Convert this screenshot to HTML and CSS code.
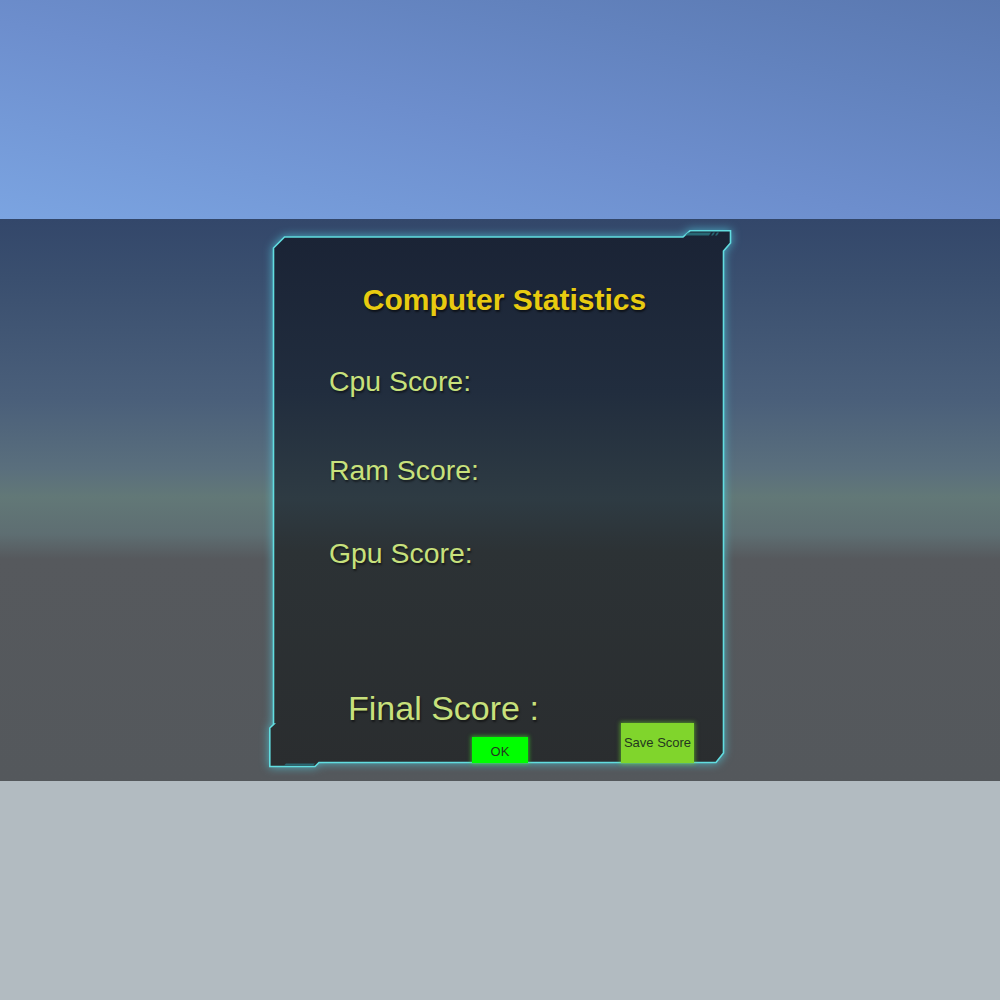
FILE: index.html
```html
<!DOCTYPE html>
<html>
<head>
<meta charset="utf-8">
<link rel="stylesheet" href="styles.css">
</head>
<body>
<div class="scene">
  <div class="sky"></div>
  <div class="horizon">
    <div class="panel">
      <svg class="frame" width="470" height="546" viewBox="-4 -4 470 546">
        <defs>
          <linearGradient id="fill" x1="0" y1="0" x2="0" y2="1">
            <stop offset="0" stop-color="#1a2335"/>
            <stop offset="0.3" stop-color="#212d3e"/>
            <stop offset="0.5" stop-color="#2e3b43"/>
            <stop offset="0.6" stop-color="#2c3235"/>
            <stop offset="1" stop-color="#2a2d2f"/>
          </linearGradient>
        </defs>
        <polygon class="shape" points="4.5,18 15.5,7 414,7 421,0.8 461.5,0.8 461.5,13 454.5,21 454.5,523 447,532.5 50,532.5 46,536.5 0.8,536.5 0.8,498 5,494 4.5,494"/>
        <polygon class="deco" points="419,2.5 442,2.5 440,5.5 416,5.5"/>
        <polygon class="deco" points="444,2.5 446,2.5 444,5.5 442,5.5"/>
        <polygon class="deco" points="448,2.5 450,2.5 448,5.5 446,5.5"/>
        <polygon class="deco" points="17,533.5 46,533.5 44,535.5 15,535.5"/>
      </svg>
      <div class="content">
        <h1 class="title">Computer Statistics</h1>
        <div class="stat stat-cpu">Cpu Score:</div>
        <div class="stat stat-ram">Ram Score:</div>
        <div class="stat stat-gpu">Gpu Score:</div>
        <div class="bottom">
          <div class="final">Final Score :</div>
          <div class="buttons">
            <button class="btn btn-ok">OK</button>
            <button class="btn btn-save">Save Score</button>
          </div>
        </div>
      </div>
    </div>
  </div>
  <div class="ground"></div>
</div>
</body>
</html>
```
FILE: styles.css
```css
html, body {
  margin: 0;
  padding: 0;
}
body {
  font-family: "Liberation Sans", Arial, sans-serif;
  width: 1000px;
  height: 1000px;
  overflow: hidden;
}
.scene {
  display: flex;
  flex-direction: column;
  width: 1000px;
  height: 1000px;
}
.sky {
  height: 219px;
  background: linear-gradient(to top right, #7ba4e1 0%, #6d8ecd 45%, #6282bd 75%, #5a78b0 100%);
}
.horizon {
  height: 562px;
  background: linear-gradient(to bottom,
    #33476a 0px,
    #3a4f6f 60px,
    #4a5f7a 180px,
    #5a6f7d 250px,
    #627877 278px,
    #5e6e72 315px,
    #56595d 340px,
    #54585c 562px);
  padding-top: 11px;
  padding-left: 269px;
  box-sizing: border-box;
}
.ground {
  height: 219px;
  background: #b2bbc1;
}
.panel {
  position: relative;
  width: 462px;
  height: 538px;
}
.frame {
  position: absolute;
  left: -4px;
  top: -4px;
  filter: drop-shadow(0 0 5px rgba(80, 205, 225, 0.75));
}
.shape {
  fill: url(#fill);
  stroke: #62dde0;
  stroke-width: 1.6;
  stroke-linejoin: miter;
}
.deco {
  fill: #2a7480;
  opacity: 0.85;
}
.content {
  position: relative;
  display: flex;
  flex-direction: column;
  height: 538px;
  box-sizing: border-box;
  padding-bottom: 5px;
}
.title {
  margin: 53px 0 0 0;
  padding-left: 9px;
  text-align: center;
  font-size: 30px;
  line-height: 34px;
  font-weight: bold;
  color: #e8cb10;
  text-shadow: 1px 2px 2px rgba(0, 0, 0, 0.55);
}
.stat {
  margin-left: 60px;
  font-size: 28.4px;
  line-height: 32px;
  color: #c8e17c;
  text-shadow: 1px 2px 2px rgba(0, 0, 0, 0.5);
}
.stat-cpu { margin-top: 48px; }
.stat-ram { margin-top: 57px; }
.stat-gpu { margin-top: 51px; }
.bottom {
  margin-top: auto;
  display: grid;
  height: 74px;
}
.bottom > * {
  grid-area: 1 / 1;
}
.final {
  align-self: start;
  margin-left: 79px;
  font-size: 34px;
  line-height: 38px;
  color: #c8e17c;
  text-shadow: 1px 2px 2px rgba(0, 0, 0, 0.5);
}
.buttons {
  align-self: end;
  display: flex;
  align-items: flex-end;
  padding-left: 203px;
  gap: 93px;
}
.btn {
  font-family: "Liberation Sans", Arial, sans-serif;
  font-size: 13px;
  color: #24371f;
  border: none;
  padding: 0;
  margin: 0;
}
.btn-ok {
  width: 56px;
  height: 26px;
  background: #00ff00;
  box-shadow: 0 0 4px 1px rgba(60, 230, 40, 0.6);
  padding-top: 2px;
}
.btn-save {
  width: 73px;
  height: 40px;
  background: #80d52c;
  box-shadow: 0 0 4px 1px rgba(110, 220, 40, 0.55);
  padding-bottom: 1px;
}
```
